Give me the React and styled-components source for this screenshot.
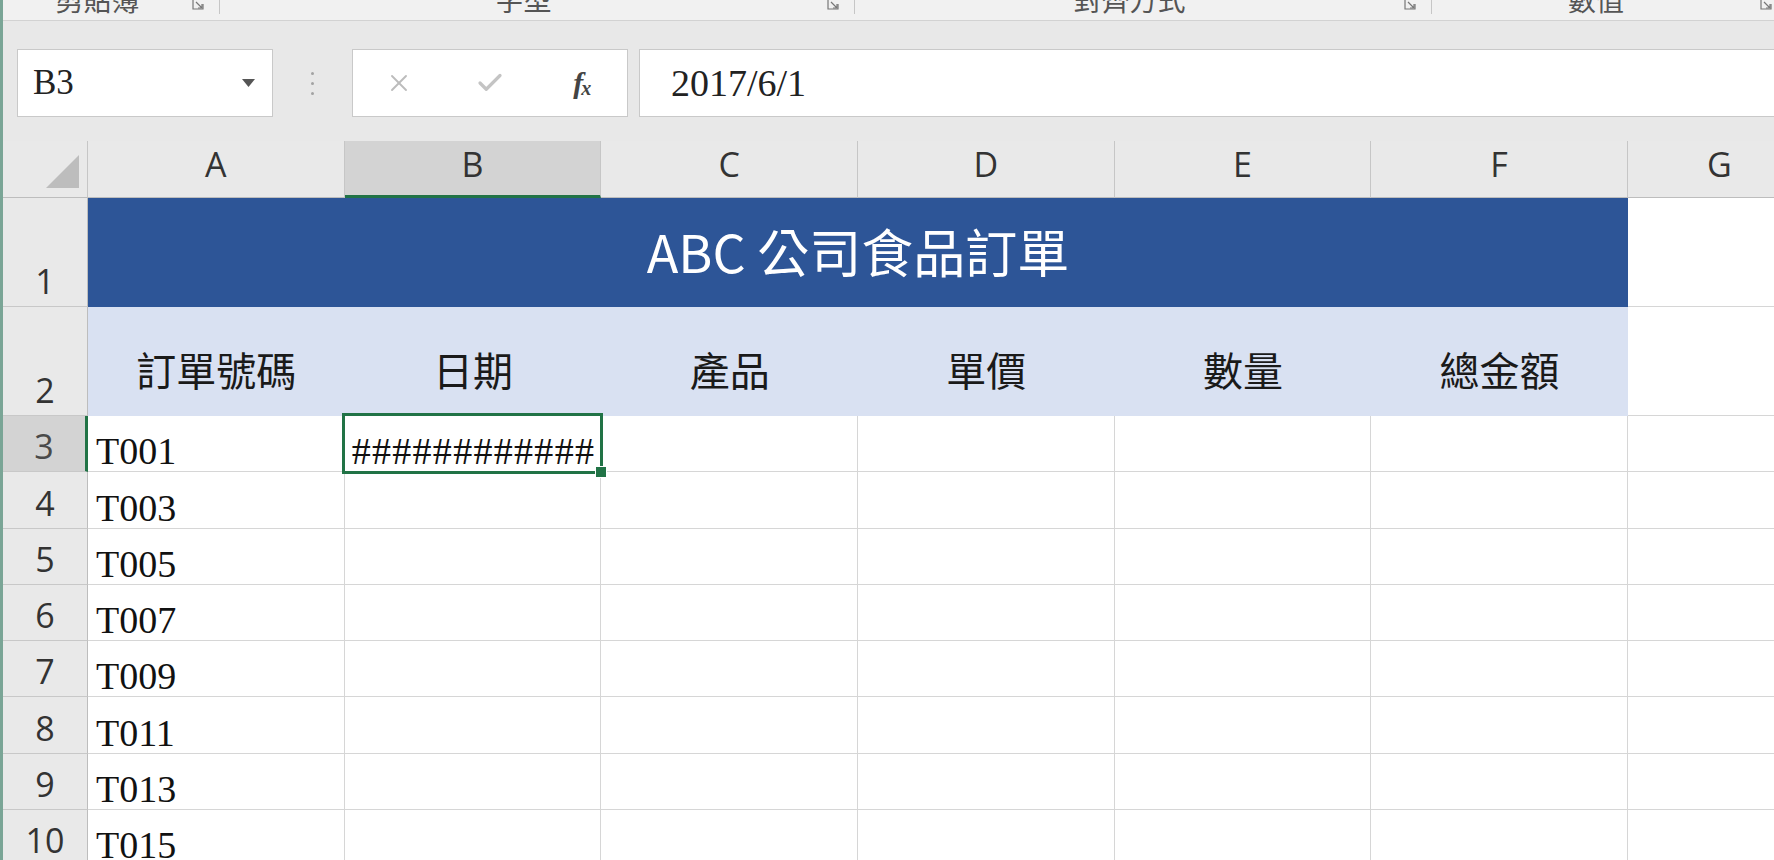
import React from "react";
import styled, { createGlobalStyle } from "styled-components";
import { X, Check } from "lucide-react";

const GlobalStyle = createGlobalStyle`
  html, body {
    margin: 0;
    padding: 0;
    overflow: hidden;
    background: #e8e8e8;
  }
  * {
    box-sizing: border-box;
  }
`;

const SERIF = `"Liberation Serif", "Noto Sans CJK TC", serif`;
const CJK = `"Noto Sans CJK TC", "Noto Sans", sans-serif`;
const UI = `"Open Sans", "Noto Sans", sans-serif`;
const GREEN = "#217346";

const Window = styled.div`
  width: 1774px;
  height: 860px;
  display: flex;
  flex-direction: column;
  border-left: 3px solid #7aa596;
  background: #e8e8e8;
  overflow: hidden;
`;

const Ribbon = styled.div`
  flex: none;
  height: 21px;
  display: flex;
  background: #f1f1f1;
  border-bottom: 1px solid #d2d2d2;
  overflow: hidden;
`;

const RibbonGroup = styled.div`
  flex: none;
  width: ${(p) => p.$w}px;
  display: flex;
  align-items: flex-start;
  position: relative;

  &::after {
    content: "";
    position: absolute;
    right: 0;
    top: 0;
    height: 14px;
    border-right: 1px solid #c6c6c6;
  }
`;

const GroupLabel = styled.div`
  flex: 1;
  text-align: center;
  font-family: ${CJK};
  font-size: 28px;
  line-height: 1;
  color: #555;
  margin-top: -15px;
`;

const Launcher = styled.svg`
  flex: none;
  width: 12px;
  height: 12px;
  margin: -2px 16px 0 0;
`;

const FormulaBar = styled.div`
  flex: none;
  height: 120px;
  display: flex;
  align-items: flex-start;
  padding-top: 28px;
`;

const NameBox = styled.div`
  flex: none;
  width: 256px;
  height: 68px;
  margin-left: 14px;
  background: #fff;
  border: 1px solid #c9c9c9;
  display: flex;
  align-items: center;
  justify-content: space-between;
  padding: 0 17px 0 15px;
  font-family: ${SERIF};
  font-size: 35px;
  color: #222;
`;

const Dots = styled.div`
  flex: none;
  width: 79px;
  height: 68px;
  display: flex;
  flex-direction: column;
  align-items: center;
  justify-content: center;
  gap: 7px;

  span {
    width: 3px;
    height: 3px;
    border-radius: 50%;
    background: #a3a3a3;
  }
`;

const FxButtons = styled.div`
  flex: none;
  width: 276px;
  height: 68px;
  background: #fff;
  border: 1px solid #c9c9c9;
  display: grid;
  grid-template-columns: repeat(3, 1fr);
  align-items: center;
  justify-items: center;
`;

const FxLabel = styled.span`
  font-family: ${SERIF};
  font-style: italic;
  font-weight: bold;
  font-size: 30px;
  color: #444;
  letter-spacing: -2px;

  sub {
    font-size: 20px;
    vertical-align: -2px;
  }
`;

const FormulaInput = styled.div`
  flex: 1;
  height: 68px;
  margin: 0 -1px 0 11px;
  background: #fff;
  border: 1px solid #c9c9c9;
  display: flex;
  align-items: center;
  padding-left: 31px;
  font-family: ${SERIF};
  font-size: 38px;
  color: #222;
`;

const Sheet = styled.div`
  flex: 1;
  min-height: 0;
  overflow: hidden;
  display: grid;
  grid-template-columns: 85px repeat(6, 256.67px) 184px 1fr;
  grid-template-rows: 57px 109px 109px repeat(8, 56.3px);
  background: #fff;
`;

const Corner = styled.div`
  background: #e9e9e9;
  border-right: 1px solid #c6c6c6;
  border-bottom: 1px solid #bdbdbd;
  display: flex;
  align-items: flex-end;
  justify-content: flex-end;
  padding: 0 8px 9px 0;
`;

const ColHead = styled.div`
  background: ${(p) => (p.$active ? "#d3d3d3" : "#e9e9e9")};
  border-right: 1px solid #c6c6c6;
  border-bottom: ${(p) => (p.$active ? `3px solid ${GREEN}` : "1px solid #bdbdbd")};
  display: flex;
  align-items: center;
  justify-content: center;
  padding-bottom: ${(p) => (p.$active ? 8 : 10)}px;
  font-family: ${UI};
  font-size: 34px;
  line-height: 1;
  color: #333;
`;

const RowHead = styled.div`
  background: ${(p) => (p.$active ? "#d3d3d3" : "#e9e9e9")};
  border-right: ${(p) => (p.$active ? `3px solid ${GREEN}` : "1px solid #bdbdbd")};
  border-bottom: 1px solid #c8c8c8;
  display: flex;
  align-items: flex-end;
  justify-content: center;
  padding-bottom: 8px;
  font-family: ${UI};
  font-size: 34px;
  line-height: 1;
  color: ${(p) => (p.$active ? "#4a4a4a" : "#333")};
`;

const TitleCell = styled.div`
  grid-column: 2 / span 6;
  background: #2d5597;
  display: flex;
  align-items: center;
  justify-content: center;
  padding-bottom: 4px;
  font-family: ${CJK};
  font-size: 52px;
  line-height: 1;
  color: #fff;
`;

const HeadCell = styled.div`
  background: #d9e1f2;
  display: flex;
  align-items: flex-end;
  justify-content: center;
  padding-bottom: 27px;
  font-family: ${CJK};
  font-size: 40px;
  line-height: 1;
  color: #1a1a1a;
`;

const Cell = styled.div`
  position: relative;
  border-right: 1px solid #d6d6d6;
  border-bottom: 1px solid #d6d6d6;
  display: flex;
  align-items: flex-end;
  padding: 0 0 1px 8px;
  font-family: ${SERIF};
  font-size: 38px;
  line-height: 1;
  color: #111;
  white-space: nowrap;
  overflow: ${(p) => (p.$selected ? "visible" : "hidden")};
`;

const Hashes = styled.span`
  letter-spacing: 1.3px;
  margin-left: -1px;
  position: relative;
  z-index: 1;
`;

const Selection = styled.div`
  position: absolute;
  top: -3px;
  left: -3px;
  right: -3px;
  bottom: -3px;
  border: 3px solid ${GREEN};
  z-index: 2;
  pointer-events: none;

  &::after {
    content: "";
    position: absolute;
    right: -7px;
    bottom: -7px;
    width: 10px;
    height: 10px;
    background: ${GREEN};
    border: 1px solid #fff;
  }
`;

const groups = [
  { label: "剪貼簿", w: 217 },
  { label: "字型", w: 635 },
  { label: "對齊方式", w: 577 },
  { label: "數值", w: 356 },
];

const columns = ["A", "B", "C", "D", "E", "F", "G", ""];
const headers = ["訂單號碼", "日期", "產品", "單價", "數量", "總金額"];
const orders = ["T001", "T003", "T005", "T007", "T009", "T011", "T013", "T015"];

const LauncherIcon = () => (
  <Launcher viewBox="0 0 12 12">
    <path d="M1 1 V11 H11 V6" fill="none" stroke="#777" strokeWidth="1.2" />
    <path d="M4 4 L10 10 M6 10 H10 V6" fill="none" stroke="#777" strokeWidth="1.2" />
  </Launcher>
);

export default function App() {
  return (
    <>
      <GlobalStyle />
      <Window>
        <Ribbon>
          {groups.map((g) => (
            <RibbonGroup key={g.label} $w={g.w}>
              <GroupLabel>{g.label}</GroupLabel>
              <LauncherIcon />
            </RibbonGroup>
          ))}
        </Ribbon>

        <FormulaBar>
          <NameBox>
            <span>B3</span>
            <svg width="13" height="8" viewBox="0 0 13 8">
              <polygon points="0,0 13,0 6.5,8" fill="#555" />
            </svg>
          </NameBox>
          <Dots>
            <span />
            <span />
            <span />
          </Dots>
          <FxButtons>
            <X size={28} color="#bcbcbc" strokeWidth={1.6} />
            <Check size={30} color="#c4c4c4" strokeWidth={2.6} />
            <FxLabel>
              f<sub>x</sub>
            </FxLabel>
          </FxButtons>
          <FormulaInput>2017/6/1</FormulaInput>
        </FormulaBar>

        <Sheet>
          <Corner>
            <svg width="33" height="33" viewBox="0 0 33 33">
              <polygon points="33,0 33,33 0,33" fill="#bdbdbd" />
            </svg>
          </Corner>
          {columns.map((c, i) => (
            <ColHead key={i} $active={c === "B"}>
              {c}
            </ColHead>
          ))}

          <RowHead>1</RowHead>
          <TitleCell>ABC 公司食品訂單</TitleCell>
          <Cell />
          <Cell />

          <RowHead>2</RowHead>
          {headers.map((h) => (
            <HeadCell key={h}>{h}</HeadCell>
          ))}
          <Cell />
          <Cell />

          {orders.map((id, i) => {
            const row = i + 3;
            return (
              <React.Fragment key={id}>
                <RowHead $active={row === 3}>{row}</RowHead>
                <Cell>{id}</Cell>
                {row === 3 ? (
                  <Cell $selected>
                    <Hashes>############</Hashes>
                    <Selection />
                  </Cell>
                ) : (
                  <Cell />
                )}
                <Cell />
                <Cell />
                <Cell />
                <Cell />
                <Cell />
                <Cell />
              </React.Fragment>
            );
          })}
        </Sheet>
      </Window>
    </>
  );
}
